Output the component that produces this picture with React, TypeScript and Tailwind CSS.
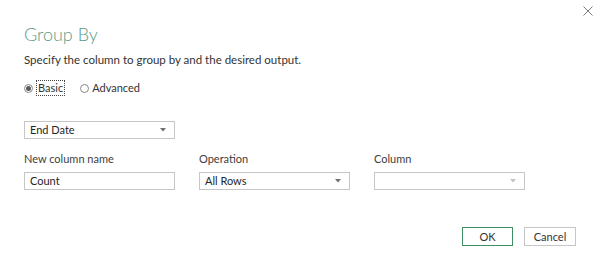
const fields = [
  { label: "New column name", kind: "input", value: "Count" },
  { label: "Operation", kind: "select", value: "All Rows" },
  { label: "Column", kind: "select", value: "", disabled: true },
] as const;

function Caret({ light = false }: { light?: boolean }) {
  return (
    <svg width="6" height="4" viewBox="0 0 6 4" className="shrink-0">
      <path d="M0 0h6L3 3.5z" fill={light ? "#c4c4c4" : "#707070"} />
    </svg>
  );
}

function Select({
  value,
  disabled = false,
  width = "w-[151px]",
}: {
  value: string;
  disabled?: boolean;
  width?: string;
}) {
  return (
    <div
      className={`flex h-[18px] items-center justify-between border border-[#c6c6c6] bg-white pr-[8px] pl-[5px] ${width}`}
    >
      <span className="text-[11px] leading-[16px] text-[#262626]">{value}</span>
      <Caret light={disabled} />
    </div>
  );
}

export default function App() {
  return (
    <div className="h-[270px] w-[602px] bg-white font-['Segoe_UI',Lato,sans-serif] text-[#333]">
      <div className="flex justify-end pt-[6px] pr-[9px]">
        <svg width="10" height="10" viewBox="0 0 10 10">
          <path d="M0.5 0.5l9 9M9.5 0.5l-9 9" stroke="#7a7a7a" strokeWidth="1" />
        </svg>
      </div>

      <div className="pl-[24px]">
        <h1 className="mt-[6px] text-[18px] leading-[24px] font-light text-[#5a9a86]">
          Group By
        </h1>
        <p className="mt-[6px] text-[11.5px] leading-[16px] text-[#333]">
          Specify the column to group by and the desired output.
        </p>

        <div className="mt-[12px] flex h-[16px] items-center text-[11px] leading-[16px]">
          <span className="flex h-[9px] w-[9px] items-center justify-center rounded-full border border-[#8a8a8a]">
            <span className="h-[5px] w-[5px] rounded-full bg-[#5a5a5a]" />
          </span>
          <span className="ml-[3px] border border-dotted border-[#444] px-[1px] leading-[14px]">
            Basic
          </span>
          <span className="ml-[15px] h-[9px] w-[9px] rounded-full border border-[#8a8a8a]" />
          <span className="ml-[3px]">Advanced</span>
        </div>

        <div className="mt-[25px]">
          <Select value="End Date" />
        </div>

        <div className="mt-[12px] flex gap-[24px]">
          {fields.map((f) => (
            <div key={f.label} className="flex w-[151px] flex-col gap-[5px]">
              <span className="text-[11px] leading-[16px] text-[#404040]">{f.label}</span>
              {f.kind === "input" ? (
                <div className="flex h-[18px] items-center border border-[#c6c6c6] pl-[5px] text-[11px] leading-[16px] text-[#262626]">
                  {f.value}
                </div>
              ) : (
                <Select value={f.value} disabled={"disabled" in f && f.disabled} />
              )}
            </div>
          ))}
        </div>

        <div className="mt-[37px] flex justify-end gap-[11px] pr-[26px]">
          <button
            type="button"
            className="h-[19px] w-[51px] border border-[#3f8f63] bg-white text-[11px] leading-[16px] text-[#333]"
          >
            OK
          </button>
          <button
            type="button"
            className="h-[19px] w-[52px] border border-[#c6c6c6] bg-white text-[11px] leading-[16px] text-[#333]"
          >
            Cancel
          </button>
        </div>
      </div>
    </div>
  );
}
